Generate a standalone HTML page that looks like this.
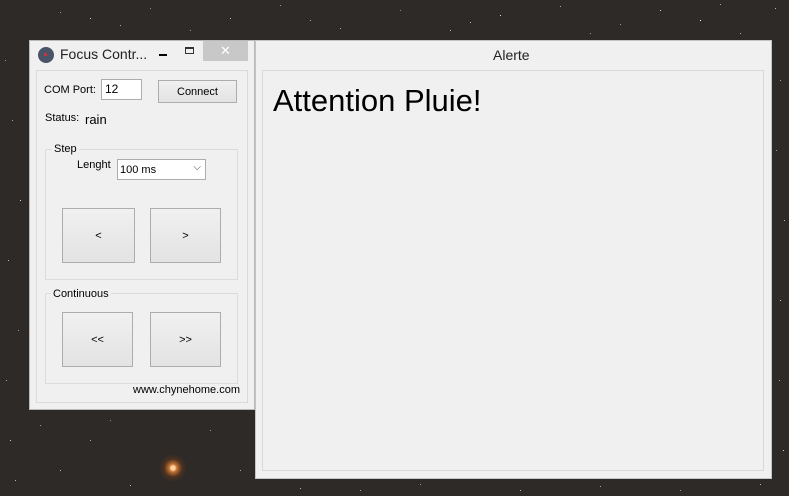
<!DOCTYPE html>
<html><head><style>
body{margin:0;width:789px;height:496px;overflow:hidden;position:relative;font-family:"Liberation Sans",sans-serif;
background:radial-gradient(circle at 173px 468px,#ffd0a0 0 2px,#c07030 4px,rgba(120,60,20,.4) 9px,transparent 14px),#2e2a28;}
div{position:absolute;box-sizing:border-box}
.t{font-size:11px;color:#000}
.btn{background:linear-gradient(#f0f0f0,#e3e3e3);border:1px solid #adadad;font-size:11px;display:flex;align-items:center;justify-content:center}
.grp{border:1px solid #dcdcdc}
.lg{background:#f0f0f0;padding:0 2px;font-size:11px}
.stars{left:0;top:0;width:1px;height:1px;background:transparent;
box-shadow:20px 200px #ddd,700px 20px #fff,780px 300px #ccc,300px 488px #bbb,500px 15px #ddd,10px 440px #ccc,
60px 12px #999,120px 25px #aaa,150px 8px #888,230px 18px #bbb,280px 5px #999,340px 28px #aaa,400px 10px #888,450px 30px #bbb,560px 6px #aaa,620px 24px #999,660px 10px #ccc,740px 33px #aaa,775px 8px #bbb,
5px 60px #999,12px 120px #aaa,8px 260px #bbb,18px 330px #999,6px 380px #aaa,15px 480px #bbb,
780px 80px #aaa,776px 150px #999,784px 220px #bbb,779px 380px #aaa,783px 450px #ccc,
40px 425px #999,90px 440px #aaa,130px 485px #bbb,210px 430px #999,240px 470px #aaa,60px 470px #bbb,110px 420px #888,
360px 490px #aaa,420px 484px #999,520px 490px #bbb,600px 486px #aaa,680px 490px #999,760px 484px #bbb,
90px 18px #ccc,190px 30px #999,310px 20px #aaa,470px 22px #bbb,590px 33px #999,720px 4px #aaa;}
</style></head><body>
<div class="stars"></div>
<div style="left:29px;top:40px;width:226px;height:370px;background:#f0f0f0;border:1px solid #b9b9b9"></div>
<div style="left:38px;top:47px;width:16px;height:16px;border-radius:50%;background:#4a5468"></div>
<div style="left:44px;top:53px;width:3px;height:3px;background:#c33"></div>
<div style="left:60px;top:46px;font-size:14px;color:#222">Focus Contr...</div>
<div style="left:159px;top:54px;width:8px;height:2px;background:#000"></div>
<div style="left:185px;top:47px;width:9px;height:7px;border:1px solid #333;border-top-width:2px"></div>
<div style="left:203px;top:41px;width:45px;height:20px;background:#c8c8c8;color:#fff;font-size:13px;text-align:center;line-height:20px">✕</div>
<div style="left:36px;top:70px;width:212px;height:333px;border:1px solid #dadada"></div>
<div class="t" style="left:44px;top:84px">COM Port:</div>
<div style="left:101px;top:79px;width:41px;height:21px;background:#fff;border:1px solid #adadad;font-size:12px;padding:2px 3px">12</div>
<div class="btn" style="left:158px;top:80px;width:79px;height:23px">Connect</div>
<div class="t" style="left:45px;top:112px">Status:</div>
<div style="left:85px;top:112px;font-size:13px">rain</div>
<div class="grp" style="left:45px;top:149px;width:193px;height:131px"></div>
<div class="lg" style="left:52px;top:143px">Step</div>
<div class="t" style="left:77px;top:159px">Lenght</div>
<div style="left:117px;top:159px;width:89px;height:21px;background:#fff;border:1px solid #adadad;font-size:11px;padding:4px 2px">100 ms<span style="position:absolute;right:4px;top:2px;font-size:10px;color:#444">⌵</span></div>
<div class="btn" style="left:62px;top:208px;width:73px;height:55px">&lt;</div>
<div class="btn" style="left:150px;top:208px;width:71px;height:55px">&gt;</div>
<div class="grp" style="left:45px;top:293px;width:193px;height:91px"></div>
<div class="lg" style="left:51px;top:288px">Continuous</div>
<div class="btn" style="left:62px;top:312px;width:71px;height:55px">&lt;&lt;</div>
<div class="btn" style="left:150px;top:312px;width:71px;height:55px">&gt;&gt;</div>
<div class="t" style="left:133px;top:384px">www.chynehome.com</div>

<div style="left:255px;top:40px;width:517px;height:439px;background:#f0f0f0;border:1px solid #c4c4c4"></div>
<div style="left:493px;top:47px;font-size:14px;color:#222">Alerte</div>
<div style="left:262px;top:70px;width:502px;height:401px;border:1px solid #d8d8d8"></div>
<div style="left:273px;top:83px;font-size:31px;color:#000">Attention Pluie!</div>
</body></html>
